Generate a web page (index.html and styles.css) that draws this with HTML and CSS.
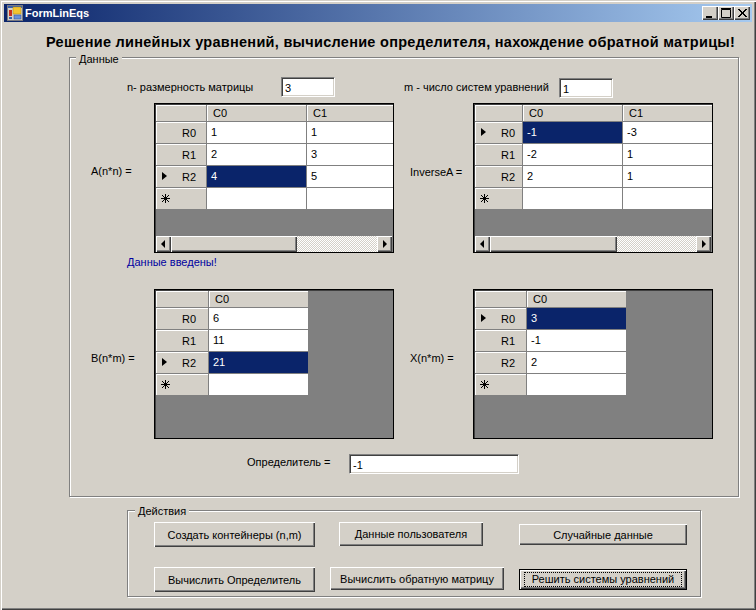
FILE: index.html
```html
<!DOCTYPE html>
<html lang="ru">
<head>
<meta charset="utf-8">
<title>FormLinEqs</title>
<link rel="stylesheet" href="styles.css">
</head>
<body>
<div class="window">
  <div class="titlebar">
    <svg class="app-icon" width="16" height="16" viewBox="0 0 16 16">
      <rect x="0.5" y="0.5" width="15" height="15" fill="#d4d0c8" stroke="#7a7a80"/>
      <rect x="1" y="1" width="14" height="2" fill="#3a5fa8"/>
      <rect x="6" y="2" width="8" height="7" fill="#f4c430" stroke="#b08a10" stroke-width="0.5"/>
      <rect x="2" y="5" width="3" height="6" fill="#c83020"/>
      <rect x="7" y="10" width="7" height="4" fill="#6a90d8" stroke="#2a4a90" stroke-width="0.5"/>
      <rect x="2" y="12" width="3" height="2" fill="#3a5fa8"/>
    </svg>
    <span class="title-text">FormLinEqs</span>
    <div class="win-buttons">
      <div class="win-btn"><svg width="14" height="12" viewBox="0 0 14 12"><rect x="3" y="9" width="6" height="2" fill="#000"/></svg></div>
      <div class="win-btn"><svg width="14" height="12" viewBox="0 0 14 12"><path d="M2.5 2.5h9v8h-9z M2 1.5h10" fill="none" stroke="#000"/></svg></div>
      <div class="win-btn"><svg width="14" height="12" viewBox="0 0 14 12"><path d="M3 2l8 8M4 2l8 8M11 2l-8 8M12 2l-8 8" fill="none" stroke="#000"/></svg></div>
    </div>
  </div>

  <h1 class="heading">Решение линейных уравнений, вычисление определителя, нахождение обратной матрицы!</h1>

  <section class="group group-data">
    <div class="legend legend-data">Данные</div>

    <div class="params">
      <span class="param-label">n- размерность матрицы</span>
      <div class="field field-small">3</div>
      <span class="param-label param-label-m">m - число систем уравнений</span>
      <div class="field field-small field-low">1</div>
    </div>

    <div class="matrix-row">
      <div class="matrix-label matrix-label-a">A(n*n) =</div>
      <div class="dgv dgv-a">
        <div class="dgv-table">
          <div class="h corner"></div><div class="h">C0</div><div class="h">C1</div>
          <div class="rh">R0</div><div class="c">1</div><div class="c">1</div>
          <div class="rh">R1</div><div class="c">2</div><div class="c">3</div>
          <div class="rh cur">R2</div><div class="c sel">4</div><div class="c">5</div>
          <div class="rh new"><svg class="star" width="9" height="9" viewBox="0 0 9 9"><path d="M4.5 0v9M0 4.5h9M1 1l7 7M8 1l-7 7" fill="none" stroke="#000"/></svg></div><div class="c"></div><div class="c"></div>
        </div>
        <div class="hscroll">
          <div class="sb-btn sb-left"></div>
          <div class="sb-thumb thumb-a"></div>
          <div class="sb-track"></div>
          <div class="sb-btn sb-right"></div>
        </div>
      </div>
      <div class="matrix-label matrix-label-r">InverseA =</div>
      <div class="dgv dgv-inv">
        <div class="dgv-table">
          <div class="h corner"></div><div class="h">C0</div><div class="h">C1</div>
          <div class="rh cur">R0</div><div class="c sel">-1</div><div class="c">-3</div>
          <div class="rh">R1</div><div class="c">-2</div><div class="c">1</div>
          <div class="rh">R2</div><div class="c">2</div><div class="c">1</div>
          <div class="rh new"><svg class="star" width="9" height="9" viewBox="0 0 9 9"><path d="M4.5 0v9M0 4.5h9M1 1l7 7M8 1l-7 7" fill="none" stroke="#000"/></svg></div><div class="c"></div><div class="c"></div>
        </div>
        <div class="hscroll">
          <div class="sb-btn sb-left"></div>
          <div class="sb-thumb thumb-inv"></div>
          <div class="sb-track"></div>
          <div class="sb-btn sb-right"></div>
        </div>
      </div>
    </div>

    <div class="status">Данные введены!</div>

    <div class="matrix-row">
      <div class="matrix-label">B(n*m) =</div>
      <div class="dgv dgv-b">
        <div class="dgv-table dgv-table-one">
          <div class="h corner"></div><div class="h">C0</div>
          <div class="rh">R0</div><div class="c">6</div>
          <div class="rh">R1</div><div class="c">11</div>
          <div class="rh cur">R2</div><div class="c sel">21</div>
          <div class="rh new"><svg class="star" width="9" height="9" viewBox="0 0 9 9"><path d="M4.5 0v9M0 4.5h9M1 1l7 7M8 1l-7 7" fill="none" stroke="#000"/></svg></div><div class="c"></div>
        </div>
      </div>
      <div class="matrix-label matrix-label-r">X(n*m) =</div>
      <div class="dgv dgv-x">
        <div class="dgv-table dgv-table-one">
          <div class="h corner"></div><div class="h">C0</div>
          <div class="rh cur">R0</div><div class="c sel">3</div>
          <div class="rh">R1</div><div class="c">-1</div>
          <div class="rh">R2</div><div class="c">2</div>
          <div class="rh new"><svg class="star" width="9" height="9" viewBox="0 0 9 9"><path d="M4.5 0v9M0 4.5h9M1 1l7 7M8 1l-7 7" fill="none" stroke="#000"/></svg></div><div class="c"></div>
        </div>
      </div>
    </div>

    <div class="det-row">
      <span class="det-label">Определитель =</span>
      <div class="field field-wide">-1</div>
    </div>
  </section>

  <section class="group group-actions">
    <div class="legend legend-actions">Действия</div>
    <div class="btn-row btn-row-1">
      <div class="btn b1">Создать контейнеры (n,m)</div>
      <div class="btn b2">Данные пользователя</div>
      <div class="btn b3">Случайные данные</div>
    </div>
    <div class="btn-row btn-row-2">
      <div class="btn b4">Вычислить Определитель</div>
      <div class="btn b5">Вычислить обратную матрицу</div>
      <div class="btn b6 default"><span class="focus">Решить системы уравнений</span></div>
    </div>
  </section>
</div>
</body>
</html>
```

FILE: styles.css
```css
* { box-sizing: border-box; }
html, body { margin: 0; padding: 0; }
body {
  width: 756px;
  height: 610px;
  overflow: hidden;
  background: #d4d0c8;
  font-family: "Liberation Sans", Arial, sans-serif;
  font-size: 11px;
  color: #000;
}
.window {
  width: 756px;
  height: 610px;
  padding: 4px;
  background: #d4d0c8;
  box-shadow: inset 1px 1px 0 #d4d0c8, inset 2px 2px 0 #fff, inset -1px -1px 0 #404040, inset -2px -2px 0 #808080;
}
.titlebar {
  height: 18px;
  display: flex;
  align-items: center;
  padding: 0 2px 0 3px;
  background: linear-gradient(to right, #0a246a, #a6caf0);
}
.app-icon { flex: none; }
.title-text {
  margin-left: 2px;
  font: bold 11px "Liberation Sans", sans-serif;
  color: #fff;
}
.win-buttons { margin-left: auto; display: flex; }
.win-btn {
  width: 16px;
  height: 14px;
  padding: 1px;
  background: #d4d0c8;
  box-shadow: inset 1px 1px 0 #fff, inset -1px -1px 0 #404040, inset -2px -2px 0 #808080;
  display: flex;
}
.heading {
  margin: 12px 0 0 42px;
  height: 16px;
  font: bold 14.5px/16px "Liberation Sans", sans-serif;
  letter-spacing: 0.28px;
  white-space: nowrap;
  color: #000;
}
.group {
  border: 1px solid #808080;
  box-shadow: inset 1px 1px 0 #fff, 1px 1px 0 #fff;
}
.legend {
  width: fit-content;
  height: 14px;
  line-height: 14px;
  padding: 0 3px;
  background: #d4d0c8;
}
.group-data {
  margin: 7px 0 0 65px;
  width: 670px;
  height: 440px;
}
.legend-data { margin: -6px 0 0 6px; }
.params {
  margin-top: 11px;
  padding-left: 57px;
  display: flex;
  align-items: flex-start;
}
.param-label { width: 154px; line-height: 20px; white-space: nowrap; }
.param-label-m { width: 155px; margin-left: 69px; }
.field {
  height: 20px;
  padding: 2px 3px;
  line-height: 16px;
  background: #fff;
  border: 1px solid;
  border-color: #808080 #fff #fff #808080;
  box-shadow: inset 1px 1px 0 #404040, inset -1px -1px 0 #d4d0c8;
  white-space: nowrap;
}
.field-small { width: 54px; }
.field-low { margin-top: 1px; }
.field-wide { width: 170px; }

.matrix-row {
  margin-top: 5px;
  padding-left: 21px;
  display: grid;
  grid-template-columns: 63px 240px 16px 63px 240px;
  align-items: center;
}
.matrix-label { grid-column: 1; white-space: nowrap; margin-top: -13px; }
.matrix-label-a { margin-top: -15px; }
.matrix-label-r { grid-column: 4; }
.dgv {
  height: 150px;
  border: 1px solid #000;
  box-shadow: inset 1px 1px 0 #404040;
  padding: 1px 1px 0 1px;
  background: #808080;
  overflow: hidden;
}
.dgv-a { --rh: 51px; }
.dgv-inv { --rh: 48px; }
.dgv-b { --rh: 53px; }
.dgv-x { --rh: 52px; }
.dgv-table {
  display: grid;
  grid-template-columns: var(--rh) 100px 100px;
  grid-template-rows: 17px repeat(4, 22px);
  height: 131px;
  width: 237px;
  overflow: hidden;
  align-content: start;
}
.dgv-table-one {
  grid-template-columns: var(--rh) 100px;
  height: 146px;
}
.h {
  background: #d4d0c8;
  border-bottom: 1px solid #808080;
  border-right: 1px solid #808080;
  box-shadow: inset 1px 1px 0 #fff;
  padding-left: 6px;
  line-height: 17px;
}
.rh {
  position: relative;
  background: #d4d0c8;
  border-bottom: 1px solid #808080;
  border-right: 1px solid #808080;
  box-shadow: inset 1px 1px 0 #fff;
  padding-left: 26px;
  line-height: 23px;
}
.rh.cur::before {
  content: "";
  position: absolute;
  left: 6px;
  top: 6px;
  border-left: 5px solid #000;
  border-top: 4.5px solid transparent;
  border-bottom: 4.5px solid transparent;
}
.rh.new { padding: 6px 0 0 5px; }
.star { display: block; }
.c {
  background: #fff;
  border-bottom: 1px solid #808080;
  border-right: 1px solid #808080;
  padding-left: 4px;
  line-height: 21px;
}
.c.sel { background: #0a246a; color: #fff; }

.hscroll {
  display: flex;
  height: 16px;
  width: 236px;
}
.sb-btn, .sb-thumb {
  background: #d4d0c8;
  box-shadow: inset 1px 1px 0 #fff, inset -1px -1px 0 #404040, inset -2px -2px 0 #808080;
}
.sb-btn { position: relative; width: 15px; flex: none; }
.sb-btn::before {
  content: "";
  position: absolute;
  top: 4px;
  border-top: 4px solid transparent;
  border-bottom: 4px solid transparent;
}
.sb-left::before { left: 5px; border-right: 4px solid #000; }
.sb-right::before { left: 6px; border-left: 4px solid #000; }
.thumb-a { width: 126px; flex: none; }
.thumb-inv { width: 127px; flex: none; }
.sb-track {
  flex: 1;
  background: repeating-conic-gradient(#fff 0 25%, #d4d0c8 0 50%) 0 0 / 2px 2px;
}

.status {
  margin: 2px 0 0 57px;
  height: 34px;
  line-height: 14px;
  color: #0000a0;
}
.status + .matrix-row { margin-top: 0; }
.det-row {
  margin-top: 15px;
  padding-left: 177px;
  display: flex;
  align-items: center;
}
.det-label { width: 102px; margin-top: -4px; white-space: nowrap; }

.group-actions {
  margin: 13px 0 0 123px;
  width: 574px;
  height: 87px;
}
.legend-actions { margin: -7px 0 0 7px; }
.btn-row { padding-left: 26px; display: flex; align-items: flex-start; }
.btn-row-1 { margin-top: 4px; }
.btn-row-2 { margin-top: 20px; }
.btn {
  display: flex;
  align-items: center;
  justify-content: center;
  background: #d4d0c8;
  box-shadow: inset 1px 1px 0 #fff, inset -1px -1px 0 #404040, inset -2px -2px 0 #808080;
  white-space: nowrap;
}
.b1 { width: 161px; height: 25px; }
.b2 { width: 144px; height: 24px; margin-left: 24px; }
.b3 { width: 168px; height: 21px; margin-left: 36px; margin-top: 2px; }
.b4 { width: 161px; height: 25px; }
.b5 { width: 174px; height: 23px; margin-left: 15px; }
.b6 { width: 168px; height: 21px; margin-left: 15px; margin-top: 2px; }
.default {
  border: 1px solid #000;
}
.focus {
  display: block;
  width: 158px;
  height: 15px;
  line-height: 13px;
  text-align: center;
  border: 1px dotted #000;
}
```
